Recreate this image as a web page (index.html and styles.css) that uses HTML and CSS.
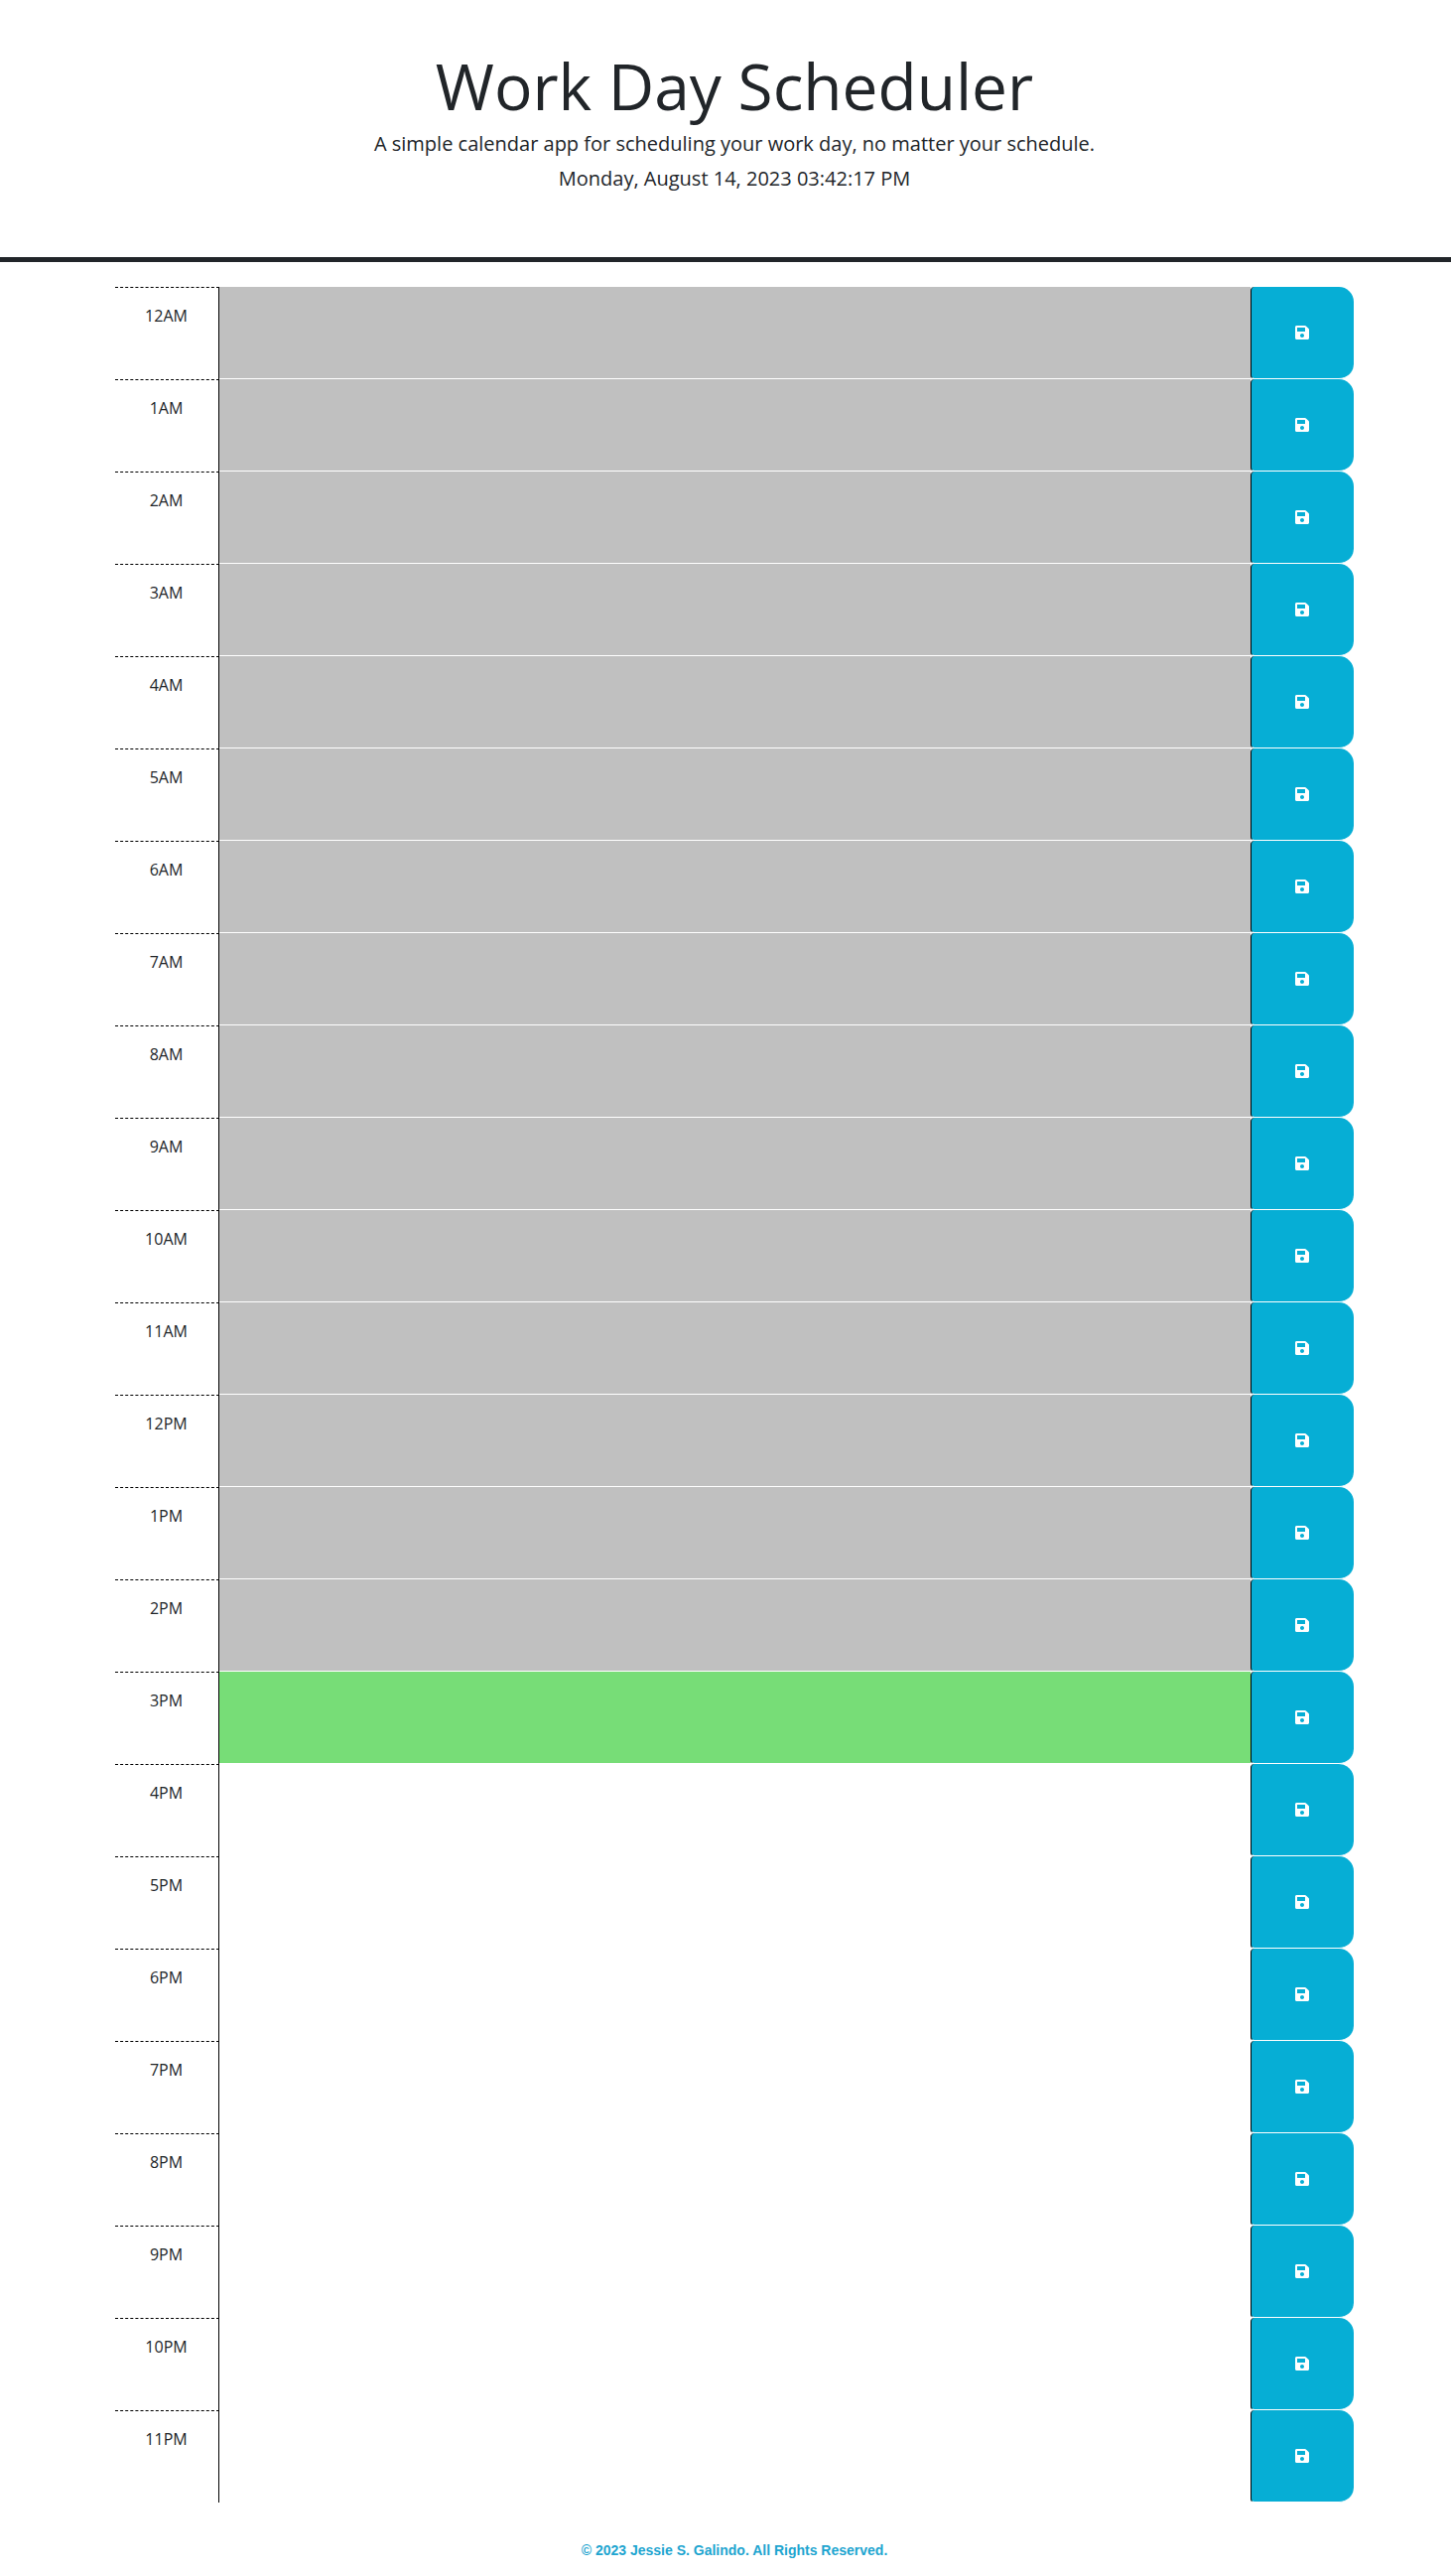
FILE: index.html
```html
<!DOCTYPE html>
<html lang="en">
<head>
    <meta charset="UTF-8">
    <title>Work Day Scheduler</title>
    <link rel="stylesheet" href="styles.css">
</head>
<body>
<header class="jumbotron">
    <h1 class="title">Work Day Scheduler</h1>
    <p class="lead">A simple calendar app for scheduling your work day, no matter your schedule.</p>
    <p class="lead" id="currentDay">Monday, August 14, 2023 03:42:17 PM</p>
</header>
<main class="container" id="timeblocks"></main>
<footer class="footer">© 2023 Jessie S. Galindo. All Rights Reserved.</footer>
<script src="script.js"></script>
</body>
</html>
```

FILE: styles.css
```css
* {
    box-sizing: border-box;
}

body {
    margin: 0;
    font-family: "Open Sans", sans-serif;
    font-size: 16px;
    line-height: 1.5;
    color: #212529;
    background-color: #fff;
}

.jumbotron {
    height: 264px;
    padding-top: 44px;
    padding-left: 18px;
    text-align: center;
    border-bottom: 5px solid #212529;
}

.title {
    margin: 0 0 2px;
    font-size: 64px;
    font-weight: 400;
    line-height: 86px;
}

.lead {
    margin: 0 0 10px;
    font-size: 20px;
    line-height: 25px;
}

.container {
    width: 1248px;
    margin: 25px 0 0 116px;
}

.row {
    display: flex;
    height: 93px;
}

.hour {
    width: 105px;
    padding-top: 16px;
    padding-right: 1px;
    text-align: center;
    border-top: 1px dashed #000;
    border-right: 1px solid #000;
}

.description {
    flex: 1;
    display: block;
    margin: 0;
    padding: 8px;
    border: 0;
    border-bottom: 1px solid #fff;
    border-radius: 0;
    outline: 0;
    resize: none;
    font-family: inherit;
    font-size: 16px;
}

.past {
    background-color: #c0c0c0;
}

.present {
    background-color: #77dd77;
}

.future {
    background-color: #fff;
}

.saveBtn {
    display: flex;
    align-items: center;
    justify-content: center;
    width: 104px;
    padding: 0 2px 0 0;
    color: #fff;
    background-color: #06aed5;
    border: 0;
    border-left: 1px solid #000;
    border-bottom: 1px solid #fff;
    border-radius: 4px 15px 15px 4px;
}

.saveBtn svg {
    width: 14px;
    height: 16px;
    fill: currentColor;
}

.footer {
    margin-top: 38px;
    padding-left: 18px;
    height: 36px;
    text-align: center;
    font-family: "Liberation Sans", Arial, sans-serif;
    font-size: 14px;
    font-weight: 700;
    line-height: 20px;
    color: #1ea5d0;
}
```

FILE: script.js
```js
var hours = ["12AM", "1AM", "2AM", "3AM", "4AM", "5AM", "6AM", "7AM", "8AM", "9AM", "10AM", "11AM",
    "12PM", "1PM", "2PM", "3PM", "4PM", "5PM", "6PM", "7PM", "8PM", "9PM", "10PM", "11PM"];
var currentHour = 15;
var icon = '<svg viewBox="0 0 448 512" aria-hidden="true"><path d="M433.941 129.941l-83.882-83.882A48 48 0 0 0 316.118 32H48C21.49 32 0 53.49 0 80v352c0 26.51 21.49 48 48 48h352c26.51 0 48-21.49 48-48V163.882a48 48 0 0 0-14.059-33.941zM224 416c-35.346 0-64-28.654-64-64 0-35.346 28.654-64 64-64s64 28.654 64 64c0 35.346-28.654 64-64 64zm96-304.52V212c0 6.627-5.373 12-12 12H76c-6.627 0-12-5.373-12-12V108c0-6.627 5.373-12 12-12h228.52c3.183 0 6.235 1.264 8.485 3.515l3.48 3.48A11.996 11.996 0 0 1 320 111.48z"/></svg>';
var box = document.getElementById("timeblocks");

//one row per hour, coloured against the current hour
for (var i = 0; i < hours.length; i++) {
    var state = i < currentHour ? "past" : (i == currentHour ? "present" : "future");
    var row = document.createElement("div");
    row.className = "row";
    row.innerHTML = '<div class="hour">' + hours[i] + '</div>' +
        '<textarea class="description ' + state + '"></textarea>' +
        '<button class="saveBtn" aria-label="save">' + icon + '</button>';
    box.appendChild(row);
}
```
